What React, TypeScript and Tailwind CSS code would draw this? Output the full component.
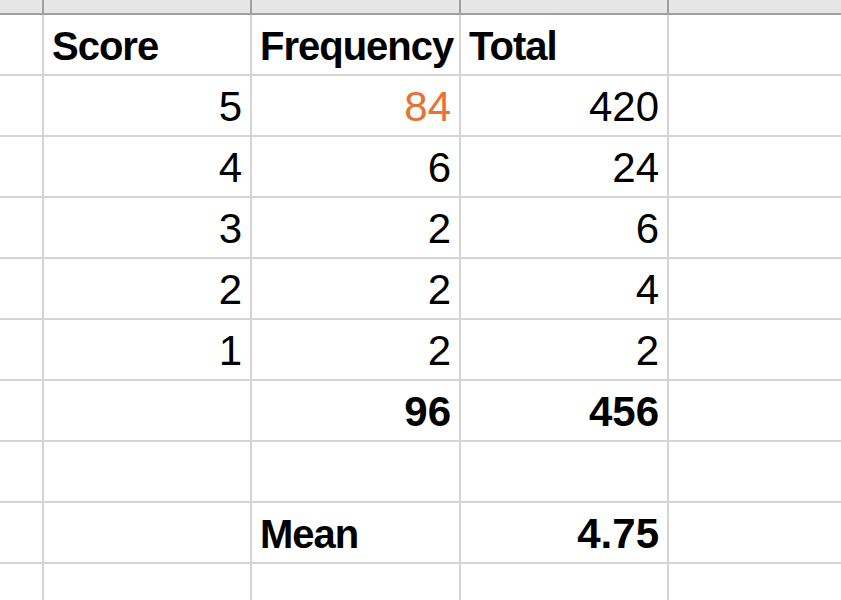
const COLS = ["", "", "", "", ""];

type Cell = { text?: string; bold?: boolean; align?: "left" | "right"; color?: string };

const rows: Cell[][] = [
  [{ text: "Score", bold: true }, { text: "Frequency", bold: true }, { text: "Total", bold: true }],
  [{ text: "5", align: "right" }, { text: "84", align: "right", color: "text-[#e97132]" }, { text: "420", align: "right" }],
  [{ text: "4", align: "right" }, { text: "6", align: "right" }, { text: "24", align: "right" }],
  [{ text: "3", align: "right" }, { text: "2", align: "right" }, { text: "6", align: "right" }],
  [{ text: "2", align: "right" }, { text: "2", align: "right" }, { text: "4", align: "right" }],
  [{ text: "1", align: "right" }, { text: "2", align: "right" }, { text: "2", align: "right" }],
  [{}, { text: "96", align: "right", bold: true }, { text: "456", align: "right", bold: true }],
  [{}, {}, {}],
  [{}, { text: "Mean", bold: true }, { text: "4.75", align: "right", bold: true }],
  [{}, {}, {}],
];

function SheetCell({ cell }: { cell: Cell }) {
  const isWord = cell.text && /[A-Za-z]/.test(cell.text);
  return (
    <div
      className={`h-[61px] border-r-2 border-b-2 border-[#d4d4d4] flex items-end px-2 whitespace-nowrap leading-none ${
        cell.align === "right" ? "justify-end" : "justify-start"
      } ${cell.bold ? "font-bold" : ""} ${
        isWord ? "text-[40px] tracking-[-1px] pb-[8px]" : "text-[42px] pb-[7px]"
      } ${cell.color ?? "text-black"}`}
    >
      {cell.text}
    </div>
  );
}

export default function App() {
  return (
    <div className="w-[841px] h-[600px] overflow-hidden bg-white font-['Liberation_Sans',Arial,sans-serif]">
      {/* column header strip */}
      <div className="grid grid-cols-[44px_208px_209px_208px_1fr] h-[15px] bg-[#e6e6e6] border-b-2 border-[#a0a0a0]">
        {COLS.map((_, i) => (
          <div key={i} className={i < 4 ? "border-r-2 border-[#a0a0a0]" : ""} />
        ))}
      </div>

      {rows.map((row, r) => (
        <div key={r} className="grid grid-cols-[44px_208px_209px_208px_1fr]">
          <div className="h-[61px] border-r-2 border-b-2 border-[#d4d4d4]" />
          {row.map((cell, c) => (
            <SheetCell key={c} cell={cell} />
          ))}
          <div className="h-[61px] border-b-2 border-[#d4d4d4]" />
        </div>
      ))}
    </div>
  );
}
